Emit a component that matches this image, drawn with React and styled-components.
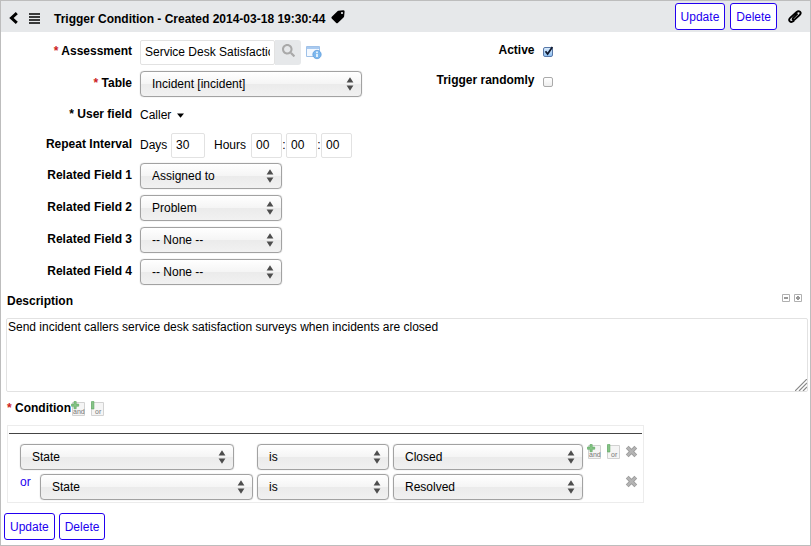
import React from "react";
import styled, { createGlobalStyle } from "styled-components";
import { FaSearch } from "react-icons/fa";

const GlobalStyle = createGlobalStyle`
  *, *::before, *::after { box-sizing: border-box; }
  body { margin: 0; background: #fff; }
  body, button, input, select, textarea {
    font-family: "Liberation Sans", Arial, Helvetica, sans-serif;
    font-size: 12px;
    line-height: 16px;
    color: #000;
  }
`;

const Frame = styled.main`
  border: 1px solid #bdbdbd;
  padding-bottom: 5px;
`;

const Header = styled.header`
  display: flex;
  align-items: center;
  height: 31px;
  padding: 0 8px;
  background: #e6e8ea;
`;

const IconButton = styled.button`
  display: flex;
  flex: none;
  padding: 0;
  border: 0;
  background: none;
  cursor: pointer;
  svg { display: block; }
`;

const HeaderNav = styled.div`
  display: flex;
  align-items: center;
  gap: 11px;
  padding-top: 3px;
`;

const Title = styled.h1`
  margin: 0 6px 0 14px;
  padding-top: 4px;
  font-size: 12px;
  line-height: 16px;
  font-weight: bold;
`;

const HeaderActions = styled.div`
  display: flex;
  align-items: center;
  gap: 5px;
  margin-left: auto;
`;

const AttachButton = styled(IconButton)`
  margin-left: 6px;
`;

const ActionButton = styled.button`
  height: 27px;
  padding: 0 5px;
  border: 1px solid #2200f0;
  border-radius: 3px;
  background: #fff;
  color: #2200f0;
  cursor: pointer;
`;

const FieldColumns = styled.div`
  display: grid;
  grid-template-columns: 1fr 1fr;
  padding: 4px 4px 0 0;
`;

const FieldRow = styled.div`
  display: flex;
  align-items: center;
  gap: 8px;
  height: ${(p) => (p.$compact ? 30 : 32)}px;
`;

const FieldLabel = styled.label`
  flex: none;
  width: 131px;
  padding-bottom: 2px;
  text-align: right;
  font-weight: bold;
  white-space: nowrap;
`;

const Required = styled.span`
  color: #c22;
`;

const Lookup = styled.div`
  display: flex;
  align-items: center;
`;

const TextInput = styled.input`
  width: ${(p) => p.$width}px;
  height: 25px;
  padding: 0 4px;
  border: 1px solid #e2e2e2;
  border-radius: 2px;
  background: #fff;
`;

const SearchButton = styled(IconButton)`
  align-items: center;
  justify-content: center;
  width: 26px;
  height: 25px;
  margin-right: 5px;
  padding-bottom: 3px;
  border-radius: 0 3px 3px 0;
  background: #e6e8ea;
  color: #a9a9a9;
`;

const SelectBox = styled.span`
  position: relative;
  flex: none;
  width: ${(p) => p.$width}px;
`;

const SelectControl = styled.select`
  display: block;
  appearance: none;
  width: 100%;
  height: 26px;
  padding: 0 24px 0 11px;
  border: 1px solid #a2a2a2;
  border-radius: 4px;
  background: linear-gradient(#fff 0%, #f5f5f5 48%, #ebebeb 52%, #f1f1f1 100%);
  box-shadow: 0 0 1px #aaa;
`;

const SelectArrows = styled.svg`
  position: absolute;
  top: 6px;
  right: 8px;
  pointer-events: none;
`;

const CallerButton = styled.button`
  display: flex;
  align-items: center;
  gap: 6px;
  padding: 0;
  border: 0;
  background: none;
`;

const Interval = styled.div`
  display: flex;
  align-items: center;
`;

const IntervalLabel = styled.label`
  width: ${(p) => p.$width}px;
`;

const HoursLabel = styled(IntervalLabel)`
  margin-left: 9px;
`;

const Colon = styled.span`
  width: 4px;
  text-align: center;
`;

const CheckHolder = styled.span`
  position: relative;
  display: block;
  margin-top: 2px;
`;

const CheckInput = styled.input`
  display: block;
  appearance: none;
  width: 10px;
  height: 10px;
  margin: 0;
  border: 1px solid #aaa;
  border-radius: 2px;
  background: linear-gradient(#fff, #eee);
  &:checked {
    border-color: #5878a8;
    background: linear-gradient(#d8eafb, #8fc0f2);
  }
  & + svg { display: none; }
  &:checked + svg { display: block; }
`;

const CheckMark = styled.svg`
  position: absolute;
  top: -1px;
  left: 1px;
  pointer-events: none;
`;

const DescriptionHead = styled.div`
  display: flex;
  align-items: center;
  justify-content: space-between;
  height: 30px;
  padding: 0 8px 4px 6px;
`;

const BlockLabel = styled.label`
  font-weight: bold;
`;

const SizeButtons = styled.div`
  display: flex;
  gap: 4px;
  padding-bottom: 6px;
`;

const DescriptionBody = styled.div`
  position: relative;
  margin: 0 2px 0 5px;
`;

const DescriptionText = styled.textarea`
  display: block;
  width: 100%;
  height: 74px;
  padding: 0 1px;
  border: 1px solid #e2e2e2;
  border-radius: 2px;
  resize: none;
`;

const Grip = styled.svg`
  position: absolute;
  right: 1px;
  bottom: 1px;
  pointer-events: none;
`;

const ConditionHead = styled.div`
  display: flex;
  align-items: center;
  gap: 5px;
  height: 33px;
  padding-left: 6px;
`;

const ConditionTitle = styled.div`
  display: flex;
  align-items: center;
  font-weight: bold;
`;

const ConditionName = styled.span`
  white-space: pre;
  padding-bottom: 1px;
`;

const ConditionPanel = styled.section`
  width: fit-content;
  margin-left: 6px;
  padding: 7px 1px 0;
  border: 1px solid #ececec;
`;

const Rule = styled.hr`
  height: 1px;
  margin: 0 0 10px;
  border: 0;
  background: #444;
`;

const ConditionRow = styled.div`
  display: flex;
  gap: 4px;
  padding: 0 4px 4px 11px;
  & + & { padding-bottom: 2px; }
`;

const FieldCell = styled.div`
  display: flex;
  justify-content: space-between;
  width: 233px;
`;

const OrLink = styled.a`
  color: #2200f0;
  text-decoration: none;
`;

const RowTools = styled.div`
  display: flex;
  justify-content: flex-end;
  gap: 5px;
  width: 51px;
  height: 16px;
`;

const Footer = styled.footer`
  display: flex;
  gap: 4px;
  padding: 10px 3px 0;
`;

function Select({ id, value, width, label }) {
  return (
    <SelectBox $width={width}>
      <SelectControl id={id} aria-label={label} defaultValue={value}>
        <option>{value}</option>
      </SelectControl>
      <SelectArrows width="8" height="14" viewBox="0 0 8 14" aria-hidden="true">
        <path d="M4 0.3 7.4 5.5H0.6zM4 13.7 7.4 8.5H0.6z" fill="#4d4d4d" />
      </SelectArrows>
    </SelectBox>
  );
}

function Check({ id, checked }) {
  return (
    <CheckHolder>
      <CheckInput id={id} type="checkbox" defaultChecked={checked} />
      <CheckMark width="10" height="10" viewBox="0 0 10 10" aria-hidden="true">
        <path d="M1.5 5.2 3.6 8 8.4 1" fill="none" stroke="#101a30" strokeWidth="1.8" />
      </CheckMark>
    </CheckHolder>
  );
}

function JoinIcon({ kind }) {
  return (
    <svg width="14" height="15" viewBox="0 0 14 15">
      <path d="M1.5 1.5H13.5V14.5H1.5z" fill="#f5f5f5" stroke="#d2d2d2" />
      <text x={kind === "and" ? 2 : 5} y="13" fontFamily="Liberation Sans, sans-serif" fontSize="7" fontWeight="normal" fill="#777">
        {kind}
      </text>
      {kind === "and" ? (
        <path d="M3 .5h2.2v2.6h2.5v2.1H5.2v2.5H3V5.2H.4V3.1H3z" fill="#86c486" stroke="#58a45c" strokeWidth=".6" />
      ) : (
        <path d="M1.5 0.5h2.4V8H1.5z" fill="#86c486" stroke="#58a45c" strokeWidth=".6" />
      )}
    </svg>
  );
}

function RemoveIcon() {
  return (
    <svg width="13" height="15" viewBox="0 0 13 15">
      <path d="M2.2 3.2 10.8 11.8M10.8 3.2 2.2 11.8" stroke="#9b9b9b" strokeWidth="4" />
      <path d="M2.5 3.5 10.5 11.5M10.5 3.5 2.5 11.5" stroke="#b4b4b4" strokeWidth="2.4" />
    </svg>
  );
}

function JoinButtons() {
  return (
    <>
      <IconButton type="button" aria-label="Add and condition"><JoinIcon kind="and" /></IconButton>
      <IconButton type="button" aria-label="Add or condition"><JoinIcon kind="or" /></IconButton>
    </>
  );
}

function SizeIcon({ plus }) {
  return (
    <svg width="8" height="8" viewBox="0 0 8 8">
      <path d="M.5.5h7v7h-7z" fill="#fff" stroke="#b0b0b0" />
      <path d={plus ? "M2 4h4M4 2v4" : "M2 4h4"} stroke="#999" strokeWidth="2" />
    </svg>
  );
}

const related = ["Assigned to", "Problem", "-- None --", "-- None --"];

export default function App() {
  return (
    <Frame>
      <GlobalStyle />
      <Header>
        <HeaderNav>
          <IconButton type="button" aria-label="Back">
            <svg width="9" height="12" viewBox="0 0 9 12">
              <path d="M7.8 1.2 2.5 6 7.8 10.8" fill="none" stroke="#000" strokeWidth="3" />
            </svg>
          </IconButton>
          <IconButton type="button" aria-label="Menu">
            <svg width="11" height="11" viewBox="0 0 11 11">
              <path d="M0 1h11M0 4h11M0 7h11M0 10h11" stroke="#000" strokeWidth="1.6" />
            </svg>
          </IconButton>
        </HeaderNav>
        <Title>Trigger Condition - Created 2014-03-18 19:30:44</Title>
        <IconButton type="button" aria-label="Tags">
          <svg width="14" height="14" viewBox="0 0 14 14">
            <path
              fillRule="evenodd"
              d="M7.3.8 12.3.3Q13.6.3 13.6 1.6L13.1 6.4Q13 7 12.5 7.5L6.8 12.9Q6 13.6 5.2 12.9L.7 8.4Q0 7.6.8 6.8L6.2 1.4Q6.7.9 7.3.8zM11 1.9a1.1 1.1 0 1 0 .01 2.2 1.1 1.1 0 0 0-.01-2.2z"
            />
          </svg>
        </IconButton>
        <HeaderActions>
          <ActionButton type="button">Update</ActionButton>
          <ActionButton type="button">Delete</ActionButton>
          <AttachButton type="button" aria-label="Attachments">
            <svg width="14" height="13" viewBox="0 0 14 13" fill="none" stroke="#000" strokeWidth="1.9" strokeLinecap="round">
              <path d="M9 4.2 5 8.2Q4.3 9.2 5 9.8 5.8 10.4 6.6 9.6L11.6 5Q13.6 3 12 1.7 10.4.4 8.4 2.2L2.4 7.6Q.2 9.8 1.8 11.3 3.4 12.7 5.6 11" />
            </svg>
          </AttachButton>
        </HeaderActions>
      </Header>

      <FieldColumns>
        <div>
          <FieldRow>
            <FieldLabel htmlFor="assessment"><Required>*</Required> Assessment</FieldLabel>
            <Lookup>
              <TextInput id="assessment" $width={135} defaultValue="Service Desk Satisfaction" />
              <SearchButton type="button" aria-label="Search assessments"><FaSearch size={13} /></SearchButton>
              <IconButton type="button" aria-label="Assessment details">
                <svg width="16" height="16" viewBox="0 0 16 16">
                  <path d="M.5 2.5h13v10H.5z" fill="#f4f9ff" stroke="#9fc1e8" />
                  <path d="M1 3h12v2H1z" fill="#a9caf0" />
                  <circle cx="11" cy="10.5" r="4.2" fill="#7db8ee" stroke="#5c9ada" strokeWidth=".7" />
                  <path d="M11 9.8v3.2M11 7.6v1.3" stroke="#fff" strokeWidth="1.5" />
                </svg>
              </IconButton>
            </Lookup>
          </FieldRow>
          <FieldRow>
            <FieldLabel htmlFor="table"><Required>*</Required> Table</FieldLabel>
            <Select id="table" value="Incident [incident]" width={222} />
          </FieldRow>
          <FieldRow $compact>
            <FieldLabel htmlFor="user-field">* User field</FieldLabel>
            <CallerButton id="user-field" type="button">
              Caller
              <svg width="7" height="5" viewBox="0 0 7 5"><path d="M0 .5h7L3.5 4.7z" /></svg>
            </CallerButton>
          </FieldRow>
          <FieldRow $compact>
            <FieldLabel as="span">Repeat Interval</FieldLabel>
            <Interval>
              <IntervalLabel htmlFor="days" $width={31}>Days</IntervalLabel>
              <TextInput id="days" $width={34} defaultValue="30" />
              <HoursLabel htmlFor="hours" $width={37}>Hours</HoursLabel>
              <TextInput id="hours" $width={31} defaultValue="00" />
              <Colon>:</Colon>
              <TextInput aria-label="Minutes" $width={31} defaultValue="00" />
              <Colon>:</Colon>
              <TextInput aria-label="Seconds" $width={31} defaultValue="00" />
            </Interval>
          </FieldRow>
          {related.map((value, i) => (
            <FieldRow key={i}>
              <FieldLabel htmlFor={`related-${i + 1}`}>Related Field {i + 1}</FieldLabel>
              <Select id={`related-${i + 1}`} value={value} width={142} />
            </FieldRow>
          ))}
        </div>
        <div>
          <FieldRow $compact>
            <FieldLabel htmlFor="active">Active</FieldLabel>
            <Check id="active" checked />
          </FieldRow>
          <FieldRow $compact>
            <FieldLabel htmlFor="randomly">Trigger randomly</FieldLabel>
            <Check id="randomly" />
          </FieldRow>
        </div>
      </FieldColumns>

      <DescriptionHead>
        <BlockLabel htmlFor="description">Description</BlockLabel>
        <SizeButtons>
          <IconButton type="button" aria-label="Shrink"><SizeIcon /></IconButton>
          <IconButton type="button" aria-label="Expand"><SizeIcon plus /></IconButton>
        </SizeButtons>
      </DescriptionHead>
      <DescriptionBody>
        <DescriptionText
          id="description"
          defaultValue="Send incident callers service desk satisfaction surveys when incidents are closed"
        />
        <Grip width="12" height="12" viewBox="0 0 12 12" aria-hidden="true">
          <path d="M0 12 12 0M4 12 12 4M8 12 12 8" stroke="#888" strokeWidth="1.2" />
        </Grip>
      </DescriptionBody>

      <ConditionHead>
        <ConditionTitle>
          <ConditionName><Required>*</Required> Condition</ConditionName>
          <IconButton type="button" aria-label="Add and condition"><JoinIcon kind="and" /></IconButton>
        </ConditionTitle>
        <IconButton type="button" aria-label="Add or condition"><JoinIcon kind="or" /></IconButton>
      </ConditionHead>
      <ConditionPanel>
        <Rule />
        <ConditionRow>
          <FieldCell><Select label="Field" value="State" width={214} /></FieldCell>
          <Select label="Operator" value="is" width={132} />
          <Select label="Value" value="Closed" width={190} />
          <RowTools>
            <JoinButtons />
            <IconButton type="button" aria-label="Remove condition"><RemoveIcon /></IconButton>
          </RowTools>
        </ConditionRow>
        <ConditionRow>
          <FieldCell>
            <OrLink href="#or">or</OrLink>
            <Select label="Field" value="State" width={213} />
          </FieldCell>
          <Select label="Operator" value="is" width={132} />
          <Select label="Value" value="Resolved" width={190} />
          <RowTools>
            <IconButton type="button" aria-label="Remove condition"><RemoveIcon /></IconButton>
          </RowTools>
        </ConditionRow>
      </ConditionPanel>
      <Footer>
        <ActionButton type="button">Update</ActionButton>
        <ActionButton type="button">Delete</ActionButton>
      </Footer>
    </Frame>
  );
}
